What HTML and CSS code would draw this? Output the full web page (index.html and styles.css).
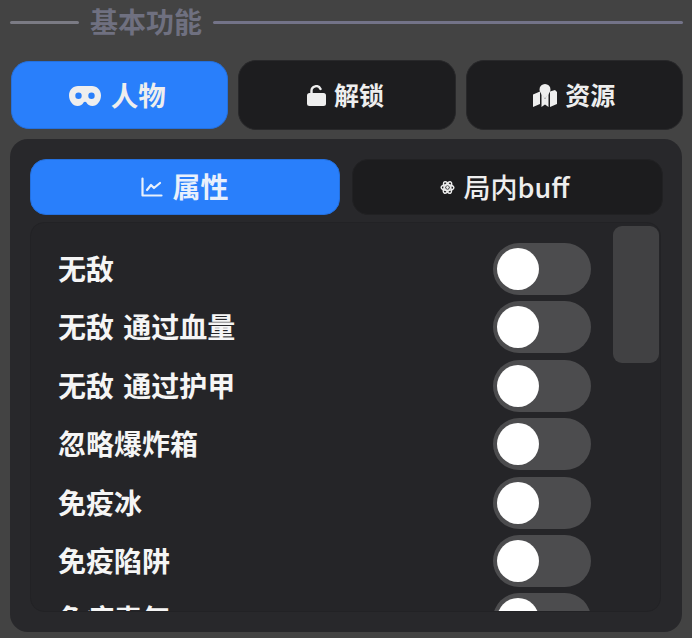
FILE: index.html
```html
<!DOCTYPE html>
<html lang="zh">
<head>
<meta charset="utf-8">
<title>基本功能</title>
<link rel="stylesheet" href="styles.css">
</head>
<body>
<div class="page">
  <div class="heading"><span class="rule rule-left"></span><span class="heading-text">基本功能</span><span class="rule rule-right"></span></div>
  <div class="tabs">
    <div class="tab active">
      <svg class="ic ic-mask" viewBox="0 0 32 20"><path fill-rule="evenodd" fill="currentColor" d="M9 0h14c5 0 9 4 9 9.500S28 20 23.500 20c-3 0-5-1.500-6-3.500-.6-1-2.400-1-3 0-1 2-3 3.500-6 3.500C4 20 0 15 0 9.500S4 0 9 0zM9.500 6.500a3.200 3.200 0 1 0 0 6.400 3.200 3.200 0 0 0 0-6.400zm13 0a3.200 3.200 0 1 0 0 6.400 3.200 3.200 0 0 0 0-6.400z"/></svg>
      <span class="tab-text">人物</span>
    </div>
    <div class="tab tab-lock">
      <svg class="ic ic-lock" viewBox="0 0 19 21"><path fill="none" stroke="currentColor" stroke-width="2.400" stroke-linecap="round" d="M4.500 9V6a4.700 4.700 0 0 1 9-2"/><rect x="0" y="8" width="19" height="13" rx="2.500" fill="currentColor"/></svg>
      <span class="tab-text">解锁</span>
    </div>
    <div class="tab">
      <svg class="ic ic-map" viewBox="0 0 24 23"><path fill="currentColor" d="M0 10.500l7-3V20l-7 3zM24 8v12l-7 3V7.500l5-1.500zM8.500 9 12 15l3.500-6V23L12 20.500 8.500 23z"/><path fill="currentColor" d="M12 0a5.500 5.500 0 0 1 5.500 5.500c0 2.500-3 6.500-5.500 9-2.500-2.500-5.500-6.500-5.500-9A5.500 5.500 0 0 1 12 0z"/></svg>
      <span class="tab-text">资源</span>
    </div>
  </div>
  <div class="panel">
    <div class="subtabs">
      <div class="subtab active">
        <svg class="ic ic-chart" viewBox="0 0 22 20"><path fill="none" stroke="currentColor" stroke-width="2.200" stroke-linecap="round" stroke-linejoin="round" d="M1.500 1.500v17h19M6 13l4-5 3 3 6-5"/></svg>
        <span class="sub-text">属性</span>
      </div>
      <div class="subtab subtab-buff">
        <svg class="ic ic-atom" viewBox="0 0 16 16"><g fill="none" stroke="currentColor" stroke-width="1.500"><ellipse cx="8" cy="8" rx="6.800" ry="3"/><ellipse cx="8" cy="8" rx="6.800" ry="3" transform="rotate(60 8 8)"/><ellipse cx="8" cy="8" rx="6.800" ry="3" transform="rotate(120 8 8)"/></g><circle cx="8" cy="8" r="1.500" fill="currentColor"/></svg>
        <span class="sub-text">局内buff</span>
      </div>
    </div>
    <div class="list-box">
      <div class="list">
        <div class="row"><span class="label">无敌</span><span class="toggle"><span class="knob"></span></span></div>
        <div class="row"><span class="label">无敌 通过血量</span><span class="toggle"><span class="knob"></span></span></div>
        <div class="row"><span class="label">无敌 通过护甲</span><span class="toggle"><span class="knob"></span></span></div>
        <div class="row"><span class="label">忽略爆炸箱</span><span class="toggle"><span class="knob"></span></span></div>
        <div class="row"><span class="label">免疫冰</span><span class="toggle"><span class="knob"></span></span></div>
        <div class="row"><span class="label">免疫陷阱</span><span class="toggle"><span class="knob"></span></span></div>
        <div class="row"><span class="label">免疫毒气</span><span class="toggle"><span class="knob"></span></span></div>
      </div>
      <div class="scrollbar"><div class="thumb"></div></div>
    </div>
  </div>
</div>
</body>
</html>
```
FILE: styles.css
```css
* { box-sizing: border-box; }
html, body { margin: 0; padding: 0; }
body {
  width: 692px;
  height: 638px;
  overflow: hidden;
  background: #434343;
  font-family: "Noto Sans CJK SC", "Noto Sans", sans-serif;
  font-weight: 700;
  color: #eeeeee;
}
.page { display: flex; flex-direction: column; height: 638px; padding: 0 9px 6px 10px; }
.heading { display: flex; align-items: center; height: 44px; gap: 11px; color: #6f7080; font-size: 28px; line-height: 44px; flex: none; }
.heading-text { white-space: nowrap; position: relative; top: -1px; }
.rule { display: block; height: 3px; background: #737388; border-radius: 2px; }
.rule-left { width: 69px; background: #7b7b84; }
.rule-right { flex: 1; }
.tabs { display: grid; grid-template-columns: repeat(3, 1fr); gap: 10px; margin-top: 16px; height: 70px; flex: none; padding-left: 1px; }
.tab {
  display: flex;
  align-items: center;
  justify-content: center;
  gap: 8px;
  background: #1d1d1f;
  border: 1px solid #28282a;
  border-radius: 18px;
  font-size: 25px;
}
.tab-text { position: relative; top: -1px; }
.tab.active { background: #297ffb; border-color: #2470de; gap: 10px; margin: 1px 0; padding-right: 5px; font-size: 27.500px; }
.tab-lock { padding-right: 3px; }
.ic { display: block; flex: none; }
.ic-mask { width: 32px; height: 20px; position: relative; top: 1px; }
.ic-lock { width: 19px; height: 21px; }
.ic-map { width: 24px; height: 23px; }
.ic-chart { width: 22px; height: 20px; }
.ic-atom { width: 15px; height: 15px; }
.panel {
  flex: 1;
  margin-top: 9px;
  margin-right: 1px;
  background: #28282b;
  border-radius: 18px;
  padding: 20px 19px 20px 20px;
  display: flex;
  flex-direction: column;
  min-height: 0;
}
.subtabs { display: grid; grid-template-columns: 310px 1fr; gap: 12px; height: 56px; flex: none; }
.subtab {
  display: flex;
  align-items: center;
  justify-content: center;
  gap: 9px;
  background: #1c1c1e;
  border: 1px solid #212123;
  border-radius: 16px;
  font-size: 27px;
}
.sub-text { position: relative; top: -1px; }
.subtab.active { background: #297ffb; border-color: #2470de; color: #e8f0fc; font-size: 28px; }
.subtab-buff { gap: 8px; padding-right: 5px; font-weight: 500; }
.list-box {
  flex: 1;
  min-height: 0;
  margin-top: 7px;
  margin-right: 2px;
  border: 1px solid #222225;
  border-radius: 14px;
  background: #252528;
  display: flex;
  overflow: hidden;
}
.list { flex: 1; min-width: 0; padding: 20px 22px 0 27px; overflow: hidden; }
.row { display: flex; align-items: center; justify-content: space-between; height: 52px; margin-bottom: 6.400px; }
.label { font-size: 28px; line-height: 52px; color: #f5f5f5; white-space: nowrap; word-spacing: 3px; position: relative; top: -1px; }
.toggle { display: flex; align-items: center; width: 98px; height: 52px; padding-left: 4px; border-radius: 26px; background: #4c4c4e; }
.knob { display: block; width: 42px; height: 42px; border-radius: 50%; background: #ffffff; }
.scrollbar { flex: none; width: 46px; padding-top: 3px; margin-right: 1px; }
.thumb { width: 46px; height: 137px; background: #414143; border-radius: 9px; }
```
